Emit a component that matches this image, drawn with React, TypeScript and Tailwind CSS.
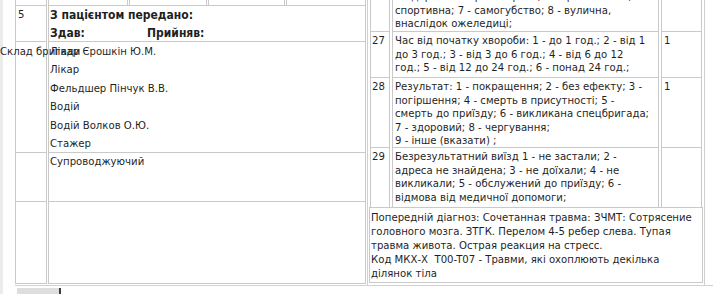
import * as React from 'react';

// рядки таблиці справа (текст розбитий так, як у картці)
const rightRows = [
  {
    num: '27',
    lines: [
      'Час від початку хвороби: 1 - до 1 год.; 2 - від 1',
      'до 3 год.; 3 - від 3 до 6 год.; 4 - від 6 до 12',
      'год.; 5 - від 12 до 24 год.; 6 - понад 24 год.;',
    ],
    value: '1',
    height: 'h-[46px]',
  },
  {
    num: '28',
    lines: [
      'Результат: 1 - покращення; 2 - без ефекту; 3 -',
      'погіршення; 4 - смерть в присутності; 5 -',
      'смерть до приїзду; 6 - викликана спецбригада;',
      '7 - здоровий; 8 - чергування;',
      '9 - інше (вказати) ;',
    ],
    value: '1',
    height: 'h-[70px]',
  },
  {
    num: '29',
    lines: [
      'Безрезультатний виїзд 1 - не застали; 2 -',
      'адреса не знайдена; 3 - не доїхали; 4 - не',
      'викликали; 5 - обслужений до приїзду; 6 -',
      'відмова від медичної допомоги;',
    ],
    value: '',
    height: 'h-[60px]',
  },
];

const diagnosis = [
  'Попередній діагноз: Сочетанная травма: ЗЧМТ: Сотрясение',
  'головного мозга. ЗТГК. Перелом 4-5 ребер слева. Тупая',
  'травма живота. Острая реакция на стресс.',
  'Код МКХ-Х  T00-T07 - Травми, які охоплюють декілька',
  'ділянок тіла',
];

const crew = [
  'Лікар Єрошкін Ю.М.',
  'Лікар',
  'Фельдшер Пінчук В.В.',
  'Водій',
  'Водій Волков О.Ю.',
  'Стажер',
];

const cell = 'border-[#c9c9c9]';

function LeftTable() {
  return (
    <div className="flex w-[352px] shrink-0 flex-col pr-[1px]">
      {/* обрізаний верхній рядок */}
      <div className="flex h-[5px] gap-x-[1px]">
        <div className={`w-[32px] shrink-0 border-x ${cell}`} />
        <div className={`w-[80px] shrink-0 border-x ${cell}`} />
        <div className={`w-[78px] shrink-0 border-x ${cell}`} />
        <div className={`w-[77px] shrink-0 border-x ${cell}`} />
        <div className={`flex-1 border-x ${cell}`} />
      </div>

      {/* 5 - з пацієнтом передано */}
      <div className="flex h-[36px] gap-x-[1px]">
        <div className={`w-[32px] shrink-0 border-x border-t ${cell} pl-[2px] leading-[18px]`}>5</div>
        <div className={`flex-1 border-x border-t ${cell} pl-[1px] text-[12px] font-bold leading-[18px]`}>
          <div>З пацієнтом передано:</div>
          <div className="flex">
            <span className="w-[97px]">Здав:</span>
            <span>Прийняв:</span>
          </div>
        </div>
      </div>

      {/* склад бригади */}
      <div className="flex h-[111px] gap-x-[1px]">
        <div className={`w-[32px] min-w-0 shrink-0 border-x border-t ${cell} pt-[1px] pl-[2px]`}>
          <span className="-ml-[18px] block whitespace-nowrap leading-[18.4px]">Склад бригади</span>
        </div>
        <div className={`flex-1 border-x border-t ${cell} pt-[1px] pl-[1px]`}>
          {crew.map((item, index) => (
            <div key={`crew-${index}`} className="h-[18.4px] whitespace-nowrap leading-[18.4px]">
              {item}
            </div>
          ))}
        </div>
      </div>

      {/* супроводжуючий */}
      <div className="flex h-[49px] gap-x-[1px]">
        <div className={`w-[32px] shrink-0 border-x border-t ${cell}`} />
        <div className={`flex-1 border-x border-t ${cell} pl-[1px] leading-[18.4px]`}>Супроводжуючий</div>
      </div>

      {/* порожній рядок */}
      <div className="flex h-[83px] gap-x-[1px]">
        <div className={`w-[32px] shrink-0 border ${cell}`} />
        <div className={`flex-1 border ${cell}`} />
      </div>
    </div>
  );
}

function RightTable() {
  return (
    <div className="flex w-[338px] shrink-0 flex-col border-x border-[#cfcfcf] px-[2px]">
      {/* обрізаний верхній рядок */}
      <div className="flex h-[31px] gap-x-[2px]">
        <div className={`w-[20px] shrink-0 border-x ${cell}`} />
        <div
          className={`flex w-[267px] shrink-0 flex-col justify-end overflow-hidden border-x ${cell} pl-[2px] leading-[13.6px]`}
        >
          <div className="whitespace-nowrap">3 - дорожньо-транспортна; 4 - кримінальна; 5 -</div>
          <div className="whitespace-nowrap">спортивна; 7 - самогубство; 8 - вулична,</div>
          <div className="whitespace-nowrap">внаслідок ожеледиці;</div>
        </div>
        <div className={`flex-1 border-x ${cell}`} />
      </div>

      {rightRows.map((row) => (
        <div key={row.num} className={`flex ${row.height} gap-x-[2px]`}>
          <div className={`w-[20px] shrink-0 border-x border-t ${cell} pt-[2px] pl-[1px] leading-[13.6px]`}>
            {row.num}
          </div>
          <div className={`w-[267px] shrink-0 border-x border-t ${cell} pt-[2px] pl-[2px] leading-[13.6px]`}>
            {row.lines.map((line, index) => (
              <div key={`${row.num}-${index}`} className="whitespace-nowrap">
                {line}
              </div>
            ))}
          </div>
          <div className={`flex-1 border-x border-t ${cell} pt-[2px] pl-[2px] leading-[13.6px]`}>{row.value}</div>
        </div>
      ))}

      {/* попередній діагноз */}
      <div className={`-mx-[1px] h-[76px] border ${cell} pt-[3px] pl-[1px] leading-[14px]`}>
        {diagnosis.map((line, index) => (
          <div key={`diag-${index}`} className="whitespace-pre">
            {line}
          </div>
        ))}
      </div>
    </div>
  );
}

export default function App() {
  return (
    <div className="flex h-[294px] w-[713px] overflow-hidden bg-white font-['DejaVu_Sans_Condensed','DejaVu_Sans',sans-serif] font-stretch-condensed text-[11.25px] text-[#1f1f1f]">
      <div className="w-[3px] shrink-0 bg-[#ebebeb]" />
      <div className="flex min-w-0 flex-1 flex-col pl-[12px]">
        <div className="flex h-[286px] shrink-0 border-b border-[#d2d2d2]">
          <LeftTable />
          <RightTable />
        </div>
        <div className="mt-[2px] ml-[2px] h-[8px] w-[44px] border-r-2 border-[#3c3c3c] bg-[#dedede]" />
      </div>
    </div>
  );
}
